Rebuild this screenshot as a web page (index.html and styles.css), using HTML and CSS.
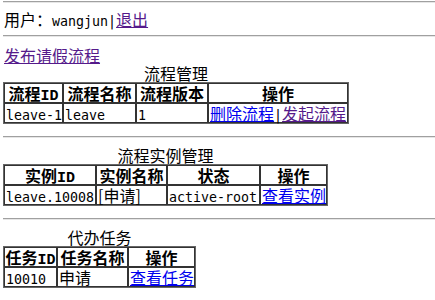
FILE: index.html
```html
<!DOCTYPE html>
<html lang="zh">
<head>
    <meta charset="UTF-8">
    <title>流程管理</title>
    <link rel="stylesheet" href="styles.css">
</head>
<body>
    <hr>
    <div class="user">用户：<span class="en">wangjun|</span><a href="#" class="visited">退出</a></div>
    <hr>
    <div class="publish"><a href="#" class="visited">发布请假流程</a></div>

    <table class="grid t1">
        <caption>流程管理</caption>
        <colgroup>
            <col class="c1">
            <col class="c2">
            <col class="c3">
            <col class="c4">
        </colgroup>
        <tr>
            <th>流程<span class="en">ID</span></th>
            <th>流程名称</th>
            <th>流程版本</th>
            <th>操作</th>
        </tr>
        <tr>
            <td><span class="en">leave-1</span></td>
            <td><span class="en">leave</span></td>
            <td><span class="en">1</span></td>
            <td><a href="#">删除流程</a><span class="en">|</span><a href="#" class="visited">发起流程</a></td>
        </tr>
    </table>
    <hr class="sep">

    <table class="grid t2">
        <caption>流程实例管理</caption>
        <colgroup>
            <col class="c1">
            <col class="c2">
            <col class="c3">
            <col class="c4">
        </colgroup>
        <tr>
            <th>实例<span class="en">ID</span></th>
            <th>实例名称</th>
            <th>状态</th>
            <th>操作</th>
        </tr>
        <tr>
            <td><span class="en">leave.10008</span></td>
            <td>[申请]</td>
            <td><span class="en">active-root</span></td>
            <td><a href="#">查看实例</a></td>
        </tr>
    </table>
    <hr class="sep">

    <table class="grid t3">
        <caption>代办任务</caption>
        <colgroup>
            <col class="c1">
            <col class="c2">
            <col class="c3">
        </colgroup>
        <tr>
            <th>任务<span class="en">ID</span></th>
            <th>任务名称</th>
            <th>操作</th>
        </tr>
        <tr>
            <td><span class="en">10010</span></td>
            <td>申请</td>
            <td><a href="#">查看任务</a></td>
        </tr>
    </table>
</body>
</html>
```

FILE: styles.css
```css
body {
    margin: 1px 0 0 3px;
    font-family: "Noto Sans CJK SC", "Liberation Mono", monospace;
    font-size: 16px;
    line-height: 18px;
    color: #000;
    background: #fff;
}

.en {
    font-family: "DejaVu Sans Mono", monospace;
    font-size: 13.3px;
    line-height: 0;
}

hr {
    margin: 0;
    height: 0;
    border: none;
    border-top: 1px solid #a0a0a0;
    border-bottom: 1px solid #e6e6e6;
}

a {
    color: #0000ee;
}

a.visited {
    color: #551a8b;
}

.user {
    height: 18px;
    padding: 7px 0 7px 1px;
}

.publish {
    height: 18px;
    padding: 9px 0 0 1px;
}

/* tables */
.grid {
    table-layout: fixed;
    border-collapse: separate;
    border-spacing: 0;
    border: 1px solid #666;
}

.grid caption {
    height: 18px;
    line-height: 18px;
}

.grid th,
.grid td {
    box-sizing: border-box;
    border: 1px solid #333;
    padding: 0 0 0 1px;
    text-align: left;
    white-space: nowrap;
    height: 20px;
    line-height: 18px;
}

.grid th {
    text-align: center;
    font-weight: bold;
    padding: 0;
}

.grid th .en {
    font-family: "Liberation Mono", monospace;
    font-size: 15px;
}

.t1 .c1 { width: 58px; }
.t1 .c2 { width: 73px; }
.t1 .c3 { width: 72px; }
.t1 .c4 { width: 140px; }

.t2 .c1 { width: 92px; }
.t2 .c2 { width: 71px; }
.t2 .c3 { width: 93px; }
.t2 .c4 { width: 66px; }

.t3 .c1 { width: 53px; }
.t3 .c2 { width: 71px; }
.t3 .c3 { width: 65px; }

hr.sep {
    margin-top: 12px;
}

.t2,
.t3 {
    margin-top: 8px;
}
```
